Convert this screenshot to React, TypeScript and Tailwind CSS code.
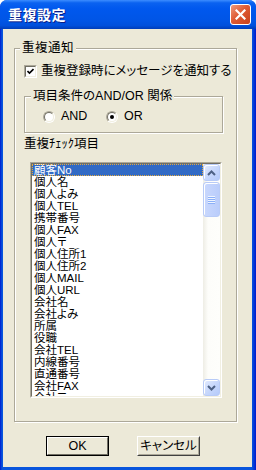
import { ReactNode } from 'react'

const items = [
  '顧客No', '個人名', '個人よみ', '個人TEL', '携帯番号', '個人FAX', '個人〒',
  '個人住所1', '個人住所2', '個人MAIL', '個人URL', '会社名', '会社よみ', '所属',
  '役職', '会社TEL', '内線番号', '直通番号', '会社FAX', '会社〒',
]

function Radio({ checked, label, className }: { checked?: boolean; label: string; className?: string }) {
  return (
    <div className={`flex items-center gap-[6px] h-[15px] ${className ?? ''}`}>
      <div className="w-[12px] h-[12px] rounded-full border border-t-[#ACA899] border-l-[#ACA899] border-b-white border-r-white flex items-center justify-center">
        <div className="w-[10px] h-[10px] rounded-full bg-white border border-t-[#716F64] border-l-[#716F64] border-b-[#F1EFE2] border-r-[#F1EFE2] flex items-center justify-center">
          {checked && <div className="w-[4px] h-[4px] rounded-full bg-black" />}
        </div>
      </div>
      <span>{label}</span>
    </div>
  )
}

function Group({ label, legendClass, className, children }: { label: string; legendClass: string; className: string; children: ReactNode }) {
  return (
    <fieldset className={`border border-[#ACA899] shadow-[1px_1px_0_#fff,inset_1px_1px_0_#fff] ${className}`}>
      <legend className={`px-[2px] h-[15px] leading-[15px] bg-[#ECE9D8] whitespace-nowrap ${legendClass}`}>{label}</legend>
      {children}
    </fieldset>
  )
}

function ScrollButton({ up }: { up?: boolean }) {
  return (
    <div className="h-[17px] w-[17px] rounded-[3px] border border-[#B8CBF7] bg-[linear-gradient(135deg,#E4ECFE_0%,#C8D8FC_50%,#B4CAFA_100%)] shadow-[inset_1px_1px_0_#fff] flex items-center justify-center">
      <svg width="9" height="6" viewBox="0 0 9 6">
        <polyline
          points={up ? '1,5 4.5,1.5 8,5' : '1,1 4.5,4.5 8,1'}
          fill="none"
          stroke="#4D6185"
          strokeWidth="2"
        />
      </svg>
    </div>
  )
}

export default function App() {
  return (
    <div className="w-[256px] h-[470px] flex flex-col rounded-t-[7px] overflow-hidden bg-[linear-gradient(90deg,#0019CF_0px,#0855DD_2px,#0855DD_252px,#0019CF_256px)] font-['Liberation_Sans','Noto_Sans_CJK_JP',sans-serif] [font-feature-settings:'palt'] text-black">
      {/* title bar */}
      <div className="h-[29px] shrink-0 flex items-center justify-between pl-[8px] pr-[5px] bg-[linear-gradient(180deg,#3C8DFF_0%,#0A62F0_10%,#0058EE_30%,#0055E6_70%,#0050DC_88%,#003DB8_100%)]">
        <span className="text-white font-bold text-[14px] tracking-[0.5px] [text-shadow:1px_1px_#0A1C85] font-['Noto_Sans_CJK_JP',sans-serif]">重複設定</span>
        <div className="w-[21px] h-[21px] rounded-[3px] border border-white bg-[linear-gradient(135deg,#EE9A7C_0%,#DF5B34_45%,#C8411C_100%)] flex items-center justify-center">
          <svg width="11" height="11" viewBox="0 0 11 11">
            <path d="M1.5 1.5 L9.5 9.5 M9.5 1.5 L1.5 9.5" stroke="#fff" strokeWidth="2.2" strokeLinecap="square" />
          </svg>
        </div>
      </div>

      {/* client area */}
      <div className="flex-1 ml-[3px] mr-[4px] mb-[3px] bg-[#ECE9D8] pt-[12px] pl-[11px] flex flex-col text-[12.5px]">
        <Group label="重複通知" legendClass="ml-[5px] tracking-[0.5px]" className="w-[223px]">
          <div className="pl-[9px] pb-[23px] flex flex-col">
            <label className="mt-[8px] h-[15px] leading-[15px] flex items-center gap-[4px] whitespace-nowrap">
              <div className="w-[13px] h-[13px] shrink-0 border border-t-[#ACA899] border-l-[#ACA899] border-b-white border-r-white">
                <div className="w-[11px] h-[11px] bg-white border border-t-[#716F64] border-l-[#716F64] border-b-[#F1EFE2] border-r-[#F1EFE2] flex items-center justify-center">
                  <svg width="7" height="7" viewBox="0 0 7 7">
                    <polyline points="0.5,3 2.5,5 6.5,1" fill="none" stroke="#000" strokeWidth="1.6" />
                  </svg>
                </div>
              </div>
              <span>重複登録時にメッセージを通知する</span>
            </label>

            <Group label="項目条件のAND/OR 関係" legendClass="ml-[6px]" className="mt-[10px] w-[199px]">
              <div className="mt-[5px] pb-[8px] pl-[18px] flex leading-[15px]">
                <Radio label="AND" className="w-[63px]" />
                <Radio label="OR" checked />
              </div>
            </Group>

            <div className="mt-[4px] h-[15px] leading-[15px]">重複ﾁｪｯｸ項目</div>

            {/* list box */}
            <div className="mt-[10px] ml-[6px] w-[192px] h-[236px] border border-t-[#ACA899] border-l-[#ACA899] border-b-white border-r-white">
              <div className="h-full bg-white border border-t-[#716F64] border-l-[#716F64] border-b-[#F1EFE2] border-r-[#F1EFE2] flex">
                <div className="flex-1 overflow-hidden text-[11.5px] leading-[12px]">
                  {items.map((item, i) => (
                    <div
                      key={item}
                      className={`h-[12px] pl-[2px] whitespace-nowrap ${i === 0 ? 'bg-[#316AC5] text-white outline-1 outline-dotted outline-[#E3A93E] -outline-offset-1' : ''}`}
                    >
                      {item}
                    </div>
                  ))}
                </div>
                <div className="w-[17px] flex flex-col bg-[linear-gradient(90deg,#EEEDE5_0%,#FDFDFA_30%,#FEFEFB_100%)]">
                  <ScrollButton up />
                  <div className="h-[35px] mt-[1px] rounded-[3px] border border-[#B8CBF7] bg-[linear-gradient(90deg,#C9D8FD_0%,#BACDFB_100%)] shadow-[inset_1px_1px_0_#fff] flex flex-col items-center justify-center gap-[1px]">
                    {[0, 1, 2, 3].map((n) => (
                      <div key={n} className="w-[7px] h-[1px] bg-[#EEF4FE] shadow-[0_1px_0_#8CB0F8]" />
                    ))}
                  </div>
                  <div className="flex-1" />
                  <ScrollButton />
                </div>
              </div>
            </div>
          </div>
        </Group>

        {/* buttons */}
        <div className="mt-[14px] ml-[32px] flex gap-[28px]">
          <button className="w-[63px] h-[20px] border border-black bg-[#ECE9D8]">
            <div className="h-full border border-t-white border-l-white border-b-[#716F64] border-r-[#716F64] flex items-center justify-center leading-none">
              OK
            </div>
          </button>
          <button className="w-[63px] h-[20px] border border-t-white border-l-white border-b-[#404040] border-r-[#404040] bg-[#ECE9D8]">
            <div className="h-full border border-t-[#ECE9D8] border-l-[#ECE9D8] border-b-[#ACA899] border-r-[#ACA899] flex items-center justify-center leading-none">
              キャンセル
            </div>
          </button>
        </div>
      </div>
    </div>
  )
}
